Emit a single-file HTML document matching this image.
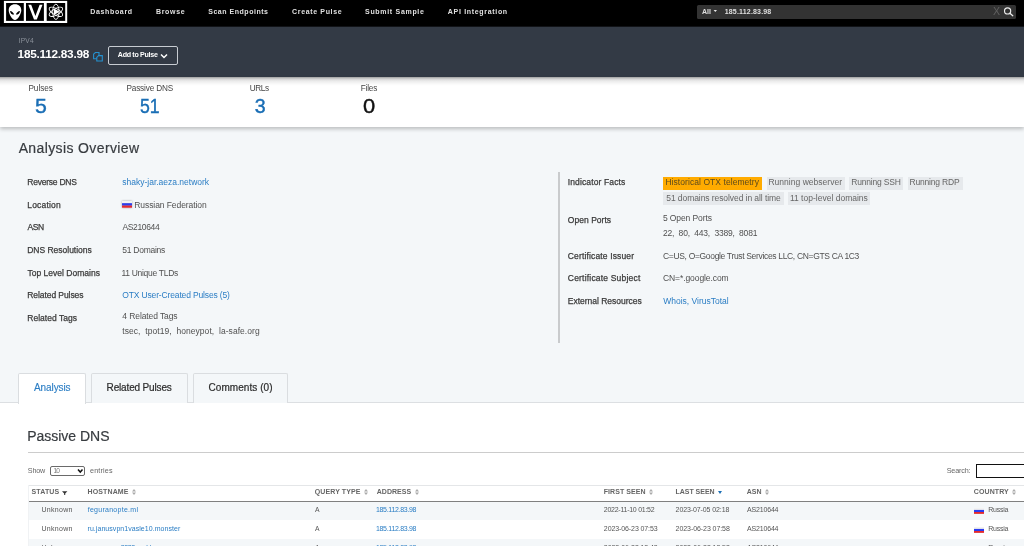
<!DOCTYPE html>
<html><head><meta charset="utf-8">
<style>
*{box-sizing:border-box;margin:0;padding:0}
html,body{width:1024px;height:546px;overflow:hidden;background:#f4f7f9;font-family:"Liberation Sans",sans-serif;color:#333}
.abs{position:absolute;white-space:nowrap}
.t{position:absolute;white-space:nowrap;line-height:1}
#nav{position:absolute;left:0;top:0;width:1024px;height:26px;background:#000}
#hdr{position:absolute;left:0;top:26px;width:1024px;height:51px;background:#333a45}
#stats{position:absolute;left:0;top:77px;width:1024px;height:49.500px;box-shadow:0 1.5px 4px rgba(0,0,0,.24);background:linear-gradient(to bottom,rgba(0,0,0,.38) 0,rgba(0,0,0,.17) 2px,rgba(0,0,0,.08) 4px,rgba(0,0,0,.025) 7px,rgba(0,0,0,0) 9px) #fff}
.tag{position:absolute;background:#e6e9ec;height:12.5px}
.tab{position:absolute;top:373px;height:29.500px;border:1px solid #dadde0;border-bottom:none;background:#f4f7f9;border-radius:2px 2px 0 0}
#txt{position:absolute;left:0;top:0;width:1024px;height:546px;will-change:transform}
</style></head><body>
<div id="nav">
 <svg class="abs" style="left:0;top:0" width="72" height="26" viewBox="0 0 72 26">
  <rect x="3.9" y="0.9" width="63.3" height="22.1" fill="#fff"/>
  <rect x="6.1" y="3" width="17.7" height="17.9" fill="#000"/><rect x="26" y="3" width="17.9" height="17.9" fill="#000"/><rect x="46.7" y="3" width="18.5" height="17.9" fill="#000"/>
  <path d="M15 4.300c-3.900 0-6.300 2.600-6.300 5.900 0 3.800 3.600 9.700 6.300 9.700s6.300-5.900 6.300-9.700c0-3.300-2.400-5.900-6.300-5.900z" fill="#fff"/>
  <path d="M10 10.900c1.900 0.200 3.700 1.600 4.100 3.700-2.200 0.100-3.900-1.500-4.100-3.700zM20 10.900c-1.900 0.200-3.700 1.600-4.100 3.700 2.200 0.100 3.900-1.500 4.100-3.700z" fill="#000"/>
  <path d="M28.300 4.700h2.900l4.200 11.300 4.200-11.300h2.900l-5.700 14.800h-2.800z" fill="#fff"/>
  <g fill="none" stroke="#fff" stroke-width="0.9"><ellipse cx="55.900" cy="11.800" rx="3.200" ry="7.600"/><ellipse cx="55.900" cy="11.800" rx="3.200" ry="7.600" transform="rotate(60 55.900 11.800)"/><ellipse cx="55.900" cy="11.800" rx="3.200" ry="7.600" transform="rotate(-60 55.900 11.800)"/></g>
  <path d="M54 8.600L59.600 11.800L54 15z" fill="#fff"/>
 </svg>
 <div class="abs" style="left:697.400px;top:4.700px;width:318.300px;height:14.100px;background:#333;border-radius:1.500px"></div>
 <svg class="abs" style="left:713px;top:9px" width="5" height="4" viewBox="713 9 5 4"><path d="M713.600 10H717L715.300 11.900z" fill="#e6e6e6"/></svg>
 <svg class="abs" style="left:1000px;top:4px" width="16" height="15" viewBox="1000 4 16 15"><circle cx="1007.600" cy="10.950" r="3.100" fill="none" stroke="#eee" stroke-width="1.150"/><path d="M1009.900 13.200L1012.800 15.700" stroke="#eee" stroke-width="1.300" stroke-linecap="round"/></svg>
</div>
<div id="hdr">
 <svg class="abs" style="left:92px;top:25px" width="12" height="12" viewBox="92 51 12 12" fill="#333a45" stroke="#2591cf" stroke-width="1.100"><path d="M93.600 54.200l1.800-1.700h3.600v6.300h-5.400z"/><path d="M96.800 57.300l1.800-1.700h3.700v5.400h-5.500z"/></svg>
 <div class="abs" style="left:108px;top:20px;width:70px;height:18.5px;border:1px solid #c8ccd2;border-radius:2px"></div>
 <svg class="abs" style="left:160px;top:27px" width="8" height="6" viewBox="0 0 8 6"><path d="M1 1.500L4 4.500L7 1.500" fill="none" stroke="#fff" stroke-width="1.500"/></svg>
</div>
<div id="stats"></div>
<div class="abs" style="left:0;top:26px;width:1024px;height:1px;background:#111317"></div>
<div id="ov">
 <svg class="abs" style="left:122.200px;top:201.200px;filter:drop-shadow(0 0 .8px rgba(0,0,0,.35))" width="10" height="6.700" viewBox="0 0 10 6" preserveAspectRatio="none"><rect width="10" height="2" fill="#f2f2f2"/><rect y="2" width="10" height="2.150" fill="#2a3cf0"/><rect y="4.150" width="10" height="1.850" fill="#e8282c"/></svg>
 <div class="abs" style="left:558px;top:172px;width:2px;height:171px;background:#c9cbcd"></div>
 <div class="tag" style="left:663.25px;top:177px;width:98.75px;background:#ffab00"></div>
 <div class="tag" style="left:766.5px;top:177px;width:78.5px"></div>
 <div class="tag" style="left:849px;top:177px;width:54px"></div>
 <div class="tag" style="left:907.5px;top:177px;width:55.25px"></div>
 <div class="tag" style="left:663.25px;top:192.25px;width:120.25px"></div>
 <div class="tag" style="left:787.75px;top:192.25px;width:82.5px"></div>
</div>
<div id="panel" class="abs" style="left:0;top:402px;width:1024px;height:144px;background:#fff;border-top:1px solid #dcdfe2"></div>
<div class="tab" style="left:18px;width:67.600px;background:#fff;height:30.5px"></div>
<div class="tab" style="left:91px;width:96.500px"></div>
<div class="tab" style="left:192.600px;width:95.400px"></div>
<div class="abs" style="left:28px;top:452px;width:996px;height:1px;background:#ccc"></div>
<div class="abs" style="left:50.200px;top:466.300px;width:35.300px;height:9.500px;border:1px solid #6a6a6a;border-radius:2px;background:#fff"></div>
<svg class="abs" style="left:77px;top:468px" width="7" height="6" viewBox="77 468 7 6"><path d="M78 469.600L80.250 472.100L82.500 469.600" fill="none" stroke="#111" stroke-width="1.500"/></svg>
<div class="abs" style="left:976px;top:464px;width:60px;height:14px;border:1px solid #111;background:#fff"></div>
<div id="tbl">
 <div class="abs" style="left:28px;top:484.5px;width:996px;height:1px;background:#e4e6e8"></div>
 <div class="abs" style="left:28px;top:500.5px;width:996px;height:1.6px;background:#808080"></div>
 <div class="abs" style="left:28px;top:502px;width:996px;height:18.25px;background:#f4f7f9"></div>
 <div class="abs" style="left:28px;top:539.25px;width:996px;height:19px;background:#f4f7f9"></div>
 <div class="abs" style="left:28px;top:485px;width:1px;height:70px;background:#f0f2f4"></div>
 <svg class="abs" style="left:974px;top:508.2px;filter:drop-shadow(0 0 .7px rgba(0,0,0,.3))" width="10" height="5.800" viewBox="0 0 10 6" preserveAspectRatio="none"><rect width="10" height="2" fill="#f2f2f2"/><rect y="2" width="10" height="2.150" fill="#2a3cf0"/><rect y="4.150" width="10" height="1.850" fill="#e8282c"/></svg>
 <svg class="abs" style="left:974px;top:527.2px;filter:drop-shadow(0 0 .7px rgba(0,0,0,.3))" width="10" height="5.800" viewBox="0 0 10 6" preserveAspectRatio="none"><rect width="10" height="2" fill="#f2f2f2"/><rect y="2" width="10" height="2.150" fill="#2a3cf0"/><rect y="4.150" width="10" height="1.850" fill="#e8282c"/></svg>
 <svg class="abs" style="left:974px;top:546.2px;filter:drop-shadow(0 0 .7px rgba(0,0,0,.3))" width="10" height="5.800" viewBox="0 0 10 6" preserveAspectRatio="none"><rect width="10" height="2" fill="#f2f2f2"/><rect y="2" width="10" height="2.150" fill="#2a3cf0"/><rect y="4.150" width="10" height="1.850" fill="#e8282c"/></svg>
 <svg class="abs" style="left:131.5px;top:489px" width="4" height="6" viewBox="0 0 4 6"><path d="M2 0L4 2.400H0zM2 6L4 3.600H0z" fill="#aaa"/></svg>
 <svg class="abs" style="left:363.5px;top:489px" width="4" height="6" viewBox="0 0 4 6"><path d="M2 0L4 2.400H0zM2 6L4 3.600H0z" fill="#aaa"/></svg>
 <svg class="abs" style="left:414.5px;top:489px" width="4" height="6" viewBox="0 0 4 6"><path d="M2 0L4 2.400H0zM2 6L4 3.600H0z" fill="#aaa"/></svg>
 <svg class="abs" style="left:649px;top:489px" width="4" height="6" viewBox="0 0 4 6"><path d="M2 0L4 2.400H0zM2 6L4 3.600H0z" fill="#aaa"/></svg>
 <svg class="abs" style="left:765px;top:489px" width="4" height="6" viewBox="0 0 4 6"><path d="M2 0L4 2.400H0zM2 6L4 3.600H0z" fill="#aaa"/></svg>
 <svg class="abs" style="left:1012.300px;top:489px" width="4" height="6" viewBox="0 0 4 6"><path d="M2 0L4 2.400H0zM2 6L4 3.600H0z" fill="#aaa"/></svg>
 <svg class="abs" style="left:718px;top:490.500px" width="4" height="3" viewBox="0 0 4 3"><path d="M0 0H4L2 3z" fill="#1a6eb5"/></svg>
 <svg class="abs" style="left:62.200px;top:490.700px" width="5.400" height="4.800" viewBox="0 0 6 5"><path d="M0 0H6L3.600 2.500V5H2.400V2.500z" fill="#333"/></svg>
</div>

<div id="txt">
<div class="t" id="t0" style="left:90.27px;top:8.00px;font-size:7px;letter-spacing:0.652px;color:#e0e0e0;font-weight:bold;">Dashboard</div>
<div class="t" id="t1" style="left:156.01px;top:8.00px;font-size:7px;letter-spacing:0.658px;color:#e0e0e0;font-weight:bold;">Browse</div>
<div class="t" id="t2" style="left:208.26px;top:8.00px;font-size:7px;letter-spacing:0.525px;color:#e0e0e0;font-weight:bold;">Scan Endpoints</div>
<div class="t" id="t3" style="left:292.08px;top:8.00px;font-size:7px;letter-spacing:0.650px;color:#e0e0e0;font-weight:bold;">Create Pulse</div>
<div class="t" id="t4" style="left:365.02px;top:8.00px;font-size:7px;letter-spacing:0.692px;color:#e0e0e0;font-weight:bold;">Submit Sample</div>
<div class="t" id="t5" style="left:447.82px;top:8.00px;font-size:7px;letter-spacing:0.681px;color:#e0e0e0;font-weight:bold;">API Integration</div>
<div class="t" id="t6" style="left:702.02px;top:8.00px;font-size:7px;letter-spacing:-0.064px;color:#e0e0e0;font-weight:bold;">All</div>
<div class="t" id="t7" style="left:724.72px;top:8.00px;font-size:7px;letter-spacing:0.179px;color:#e0e0e0;font-weight:bold;">185.112.83.98</div>
<div class="t" id="t8" style="left:993.03px;top:6.00px;font-size:11.5px;letter-spacing:0.000px;transform:scaleX(0.924);transform-origin:0 0;color:#606060;">X</div>
<div class="t" id="t9" style="left:18.75px;top:38.00px;font-size:6.6px;letter-spacing:0.187px;color:#8d939c;">IPV4</div>
<div class="t" id="t10" style="left:17.60px;top:49.00px;font-size:11.8px;letter-spacing:-0.258px;color:#fff;font-weight:bold;">185.112.83.98</div>
<div class="t" id="t11" style="left:117.82px;top:52.00px;font-size:7.1px;letter-spacing:-0.302px;color:#fff;font-weight:bold;">Add to Pulse</div>
<div class="t" id="t12" style="left:28.44px;top:85.00px;font-size:8.2px;letter-spacing:-0.038px;color:#444;">Pulses</div>
<div class="t" id="t13" style="left:126.43px;top:85.00px;font-size:8.2px;letter-spacing:-0.148px;color:#444;">Passive DNS</div>
<div class="t" id="t14" style="left:249.73px;top:85.00px;font-size:8.2px;letter-spacing:-0.386px;color:#444;">URLs</div>
<div class="t" id="t15" style="left:360.69px;top:85.00px;font-size:8.2px;letter-spacing:-0.182px;color:#444;">Files</div>
<div class="t" id="t16" style="left:35.20px;top:97.00px;font-size:19.6px;letter-spacing:0.000px;transform:scaleX(1.086);transform-origin:0 0;color:#1a6eb5;-webkit-text-stroke:.4px #1a6eb5;">5</div>
<div class="t" id="t17" style="left:140.09px;top:97.00px;font-size:19.6px;letter-spacing:0.000px;transform:scaleX(0.902);transform-origin:0 0;color:#1a6eb5;-webkit-text-stroke:.4px #1a6eb5;">51</div>
<div class="t" id="t18" style="left:254.72px;top:97.00px;font-size:19.6px;letter-spacing:0.000px;color:#1a6eb5;-webkit-text-stroke:.4px #1a6eb5;">3</div>
<div class="t" id="t19" style="left:363.29px;top:97.00px;font-size:19.6px;letter-spacing:0.000px;transform:scaleX(1.118);transform-origin:0 0;color:#111;-webkit-text-stroke:.4px #111;">0</div>
<div class="t" id="t20" style="left:18.65px;top:141.00px;font-size:14px;letter-spacing:0.380px;color:#383c40;-webkit-text-stroke:.2px #383c40;">Analysis Overview</div>
<div class="t" id="t21" style="left:27.26px;top:178.00px;font-size:8.5px;letter-spacing:-0.227px;color:#3a3a3a;-webkit-text-stroke:.25px #3a3a3a;">Reverse DNS</div>
<div class="t" id="t22" style="left:122.27px;top:178.00px;font-size:8.5px;letter-spacing:-0.005px;color:#2a7dc4;">shaky-jar.aeza.network</div>
<div class="t" id="t23" style="left:27.28px;top:201.00px;font-size:8.5px;letter-spacing:0.189px;color:#3a3a3a;-webkit-text-stroke:.25px #3a3a3a;">Location</div>
<div class="t" id="t24" style="left:134.25px;top:201.00px;font-size:8.5px;letter-spacing:-0.072px;color:#505050;">Russian Federation</div>
<div class="t" id="t25" style="left:27.44px;top:223.00px;font-size:8.5px;letter-spacing:-0.386px;color:#3a3a3a;-webkit-text-stroke:.25px #3a3a3a;">ASN</div>
<div class="t" id="t26" style="left:122.41px;top:223.00px;font-size:8.5px;letter-spacing:-0.350px;color:#505050;">AS210644</div>
<div class="t" id="t27" style="left:27.26px;top:246.00px;font-size:8.5px;letter-spacing:-0.017px;color:#3a3a3a;-webkit-text-stroke:.25px #3a3a3a;">DNS Resolutions</div>
<div class="t" id="t28" style="left:122.24px;top:246.00px;font-size:8.5px;letter-spacing:-0.255px;color:#505050;">51 Domains</div>
<div class="t" id="t29" style="left:27.42px;top:269.00px;font-size:8.5px;letter-spacing:0.021px;color:#3a3a3a;-webkit-text-stroke:.25px #3a3a3a;">Top Level Domains</div>
<div class="t" id="t30" style="left:121.40px;top:269.00px;font-size:8.5px;letter-spacing:-0.286px;color:#505050;">11 Unique TLDs</div>
<div class="t" id="t31" style="left:27.27px;top:291.00px;font-size:8.5px;letter-spacing:-0.075px;color:#3a3a3a;-webkit-text-stroke:.25px #3a3a3a;">Related Pulses</div>
<div class="t" id="t32" style="left:122.29px;top:291.00px;font-size:8.5px;letter-spacing:-0.149px;color:#2a7dc4;">OTX User-Created Pulses (5)</div>
<div class="t" id="t33" style="left:27.27px;top:314.00px;font-size:8.5px;letter-spacing:0.027px;color:#3a3a3a;-webkit-text-stroke:.25px #3a3a3a;">Related Tags</div>
<div class="t" id="t34" style="left:122.30px;top:312.00px;font-size:8.5px;letter-spacing:-0.094px;color:#505050;">4 Related Tags</div>
<div class="t" id="t35" style="left:122.35px;top:327.00px;font-size:8.5px;letter-spacing:0.045px;color:#505050;white-space:pre;">tsec,  tpot19,  honeypot,  la-safe.org</div>
<div class="t" id="t36" style="left:567.73px;top:178.00px;font-size:8.5px;letter-spacing:0.127px;color:#3a3a3a;-webkit-text-stroke:.25px #3a3a3a;">Indicator Facts</div>
<div class="t" id="t37" style="left:567.83px;top:216.00px;font-size:8.5px;letter-spacing:0.029px;color:#3a3a3a;-webkit-text-stroke:.25px #3a3a3a;">Open Ports</div>
<div class="t" id="t38" style="left:662.99px;top:214.00px;font-size:8.5px;letter-spacing:-0.105px;color:#505050;">5 Open Ports</div>
<div class="t" id="t39" style="left:663.02px;top:229.00px;font-size:8.5px;letter-spacing:-0.186px;color:#505050;white-space:pre;">22,  80,  443,  3389,  8081</div>
<div class="t" id="t40" style="left:567.84px;top:252.00px;font-size:8.5px;letter-spacing:0.144px;color:#3a3a3a;-webkit-text-stroke:.25px #3a3a3a;">Certificate Issuer</div>
<div class="t" id="t41" style="left:663.01px;top:252.00px;font-size:8.5px;letter-spacing:-0.331px;color:#505050;">C=US, O=Google Trust Services LLC, CN=GTS CA 1C3</div>
<div class="t" id="t42" style="left:567.85px;top:274.00px;font-size:8.5px;letter-spacing:0.191px;color:#3a3a3a;-webkit-text-stroke:.25px #3a3a3a;">Certificate Subject</div>
<div class="t" id="t43" style="left:663.03px;top:274.00px;font-size:8.5px;letter-spacing:-0.089px;color:#505050;">CN=*.google.com</div>
<div class="t" id="t44" style="left:567.77px;top:297.00px;font-size:8.5px;letter-spacing:-0.012px;color:#3a3a3a;-webkit-text-stroke:.25px #3a3a3a;">External Resources</div>
<div class="t" id="t45" style="left:663.17px;top:297.00px;font-size:8.5px;letter-spacing:-0.001px;color:#2a7dc4;">Whois, VirusTotal</div>
<div class="t" id="t46" style="left:665.39px;top:178.00px;font-size:8.5px;letter-spacing:0.063px;color:#5c4a1c;">Historical OTX telemetry</div>
<div class="t" id="t47" style="left:768.45px;top:178.00px;font-size:8.5px;letter-spacing:0.024px;color:#666;">Running webserver</div>
<div class="t" id="t48" style="left:851.25px;top:178.00px;font-size:8.5px;letter-spacing:-0.190px;color:#666;">Running SSH</div>
<div class="t" id="t49" style="left:909.46px;top:178.00px;font-size:8.5px;letter-spacing:-0.185px;color:#666;">Running RDP</div>
<div class="t" id="t50" style="left:666.24px;top:194.00px;font-size:8.5px;letter-spacing:-0.071px;color:#666;">51 domains resolved in all time</div>
<div class="t" id="t51" style="left:789.90px;top:194.00px;font-size:8.5px;letter-spacing:0.008px;color:#666;">11 top-level domains</div>
<div class="t" id="t52" style="left:34.01px;top:383.00px;font-size:10px;letter-spacing:-0.091px;color:#2a7dc4;-webkit-text-stroke:.12px #2a7dc4;">Analysis</div>
<div class="t" id="t53" style="left:106.60px;top:383.00px;font-size:10px;letter-spacing:-0.158px;color:#2b2b2b;-webkit-text-stroke:.2px #2b2b2b;">Related Pulses</div>
<div class="t" id="t54" style="left:208.53px;top:383.00px;font-size:10px;letter-spacing:0.063px;color:#2b2b2b;-webkit-text-stroke:.2px #2b2b2b;">Comments (0)</div>
<div class="t" id="t55" style="left:27.13px;top:429.00px;font-size:14px;letter-spacing:-0.005px;color:#383c40;-webkit-text-stroke:.2px #383c40;">Passive DNS</div>
<div class="t" id="t56" style="left:27.87px;top:467.00px;font-size:7.2px;letter-spacing:-0.208px;color:#666;">Show</div>
<div class="t" id="t57" style="left:90.07px;top:467.00px;font-size:7.2px;letter-spacing:0.153px;color:#666;">entries</div>
<div class="t" id="t58" style="left:946.74px;top:467.00px;font-size:7.2px;letter-spacing:-0.177px;color:#666;">Search:</div>
<div class="t" id="t59" style="left:53.48px;top:468.00px;font-size:6.6px;letter-spacing:-0.951px;color:#777;">10</div>
<div class="t" id="t60" style="left:31.51px;top:488.00px;font-size:7px;letter-spacing:0.146px;color:#666;font-weight:bold;">STATUS</div>
<div class="t" id="t61" style="left:87.51px;top:488.00px;font-size:7px;letter-spacing:0.131px;color:#666;font-weight:bold;">HOSTNAME</div>
<div class="t" id="t62" style="left:314.83px;top:488.00px;font-size:7px;letter-spacing:0.093px;color:#666;font-weight:bold;">QUERY TYPE</div>
<div class="t" id="t63" style="left:376.82px;top:488.00px;font-size:7px;letter-spacing:0.006px;color:#666;font-weight:bold;">ADDRESS</div>
<div class="t" id="t64" style="left:603.76px;top:488.00px;font-size:7px;letter-spacing:0.064px;color:#666;font-weight:bold;">FIRST SEEN</div>
<div class="t" id="t65" style="left:675.51px;top:488.00px;font-size:7px;letter-spacing:-0.026px;color:#666;font-weight:bold;">LAST SEEN</div>
<div class="t" id="t66" style="left:746.82px;top:488.00px;font-size:7px;letter-spacing:-0.015px;color:#666;font-weight:bold;">ASN</div>
<div class="t" id="t67" style="left:973.83px;top:488.00px;font-size:7px;letter-spacing:0.087px;color:#666;font-weight:bold;">COUNTRY</div>
<div class="t" id="t68" style="left:41.52px;top:506.00px;font-size:7px;letter-spacing:0.297px;color:#555;">Unknown</div>
<div class="t" id="t69" style="left:87.66px;top:506.00px;font-size:7px;letter-spacing:0.276px;color:#2a7dc4;">feguranopte.ml</div>
<div class="t" id="t70" style="left:314.93px;top:506.00px;font-size:7px;letter-spacing:0.000px;transform:scaleX(0.967);transform-origin:0 0;color:#555;">A</div>
<div class="t" id="t71" style="left:375.90px;top:506.00px;font-size:7px;letter-spacing:-0.302px;color:#2a7dc4;">185.112.83.98</div>
<div class="t" id="t72" style="left:603.87px;top:506.00px;font-size:7px;letter-spacing:-0.269px;color:#555;">2022-11-10 01:52</div>
<div class="t" id="t73" style="left:675.60px;top:506.00px;font-size:7px;letter-spacing:-0.103px;color:#555;">2023-07-05 02:18</div>
<div class="t" id="t74" style="left:746.89px;top:506.00px;font-size:7px;letter-spacing:-0.151px;color:#555;">AS210644</div>
<div class="t" id="t75" style="left:988.28px;top:506.00px;font-size:7px;letter-spacing:-0.262px;color:#555;">Russia</div>
<div class="t" id="t76" style="left:41.52px;top:525.00px;font-size:7px;letter-spacing:0.297px;color:#555;">Unknown</div>
<div class="t" id="t77" style="left:87.55px;top:525.00px;font-size:7px;letter-spacing:0.048px;color:#2a7dc4;">ru.janusvpn1vasle10.monster</div>
<div class="t" id="t78" style="left:314.93px;top:525.00px;font-size:7px;letter-spacing:0.000px;transform:scaleX(0.967);transform-origin:0 0;color:#555;">A</div>
<div class="t" id="t79" style="left:375.90px;top:525.00px;font-size:7px;letter-spacing:-0.302px;color:#2a7dc4;">185.112.83.98</div>
<div class="t" id="t80" style="left:603.85px;top:525.00px;font-size:7px;letter-spacing:-0.097px;color:#555;">2023-06-23 07:53</div>
<div class="t" id="t81" style="left:675.60px;top:525.00px;font-size:7px;letter-spacing:-0.068px;color:#555;">2023-06-23 07:58</div>
<div class="t" id="t82" style="left:746.89px;top:525.00px;font-size:7px;letter-spacing:-0.151px;color:#555;">AS210644</div>
<div class="t" id="t83" style="left:988.28px;top:525.00px;font-size:7px;letter-spacing:-0.262px;color:#555;">Russia</div>
<div class="t" id="t84" style="left:41.52px;top:544.00px;font-size:7px;letter-spacing:0.297px;color:#555;">Unknown</div>
<div class="t" id="t85" style="left:87.61px;top:544.00px;font-size:7px;letter-spacing:-0.423px;color:#2a7dc4;">ecuzansave8888.world</div>
<div class="t" id="t86" style="left:314.93px;top:544.00px;font-size:7px;letter-spacing:0.000px;transform:scaleX(0.967);transform-origin:0 0;color:#555;">A</div>
<div class="t" id="t87" style="left:375.90px;top:544.00px;font-size:7px;letter-spacing:-0.302px;color:#2a7dc4;">185.112.83.98</div>
<div class="t" id="t88" style="left:603.85px;top:544.00px;font-size:7px;letter-spacing:-0.097px;color:#555;">2023-06-23 18:48</div>
<div class="t" id="t89" style="left:675.60px;top:544.00px;font-size:7px;letter-spacing:-0.068px;color:#555;">2023-06-23 18:58</div>
<div class="t" id="t90" style="left:746.89px;top:544.00px;font-size:7px;letter-spacing:-0.151px;color:#555;">AS210644</div>
<div class="t" id="t91" style="left:988.28px;top:544.00px;font-size:7px;letter-spacing:-0.262px;color:#555;">Russia</div>
</div>
</body></html>
